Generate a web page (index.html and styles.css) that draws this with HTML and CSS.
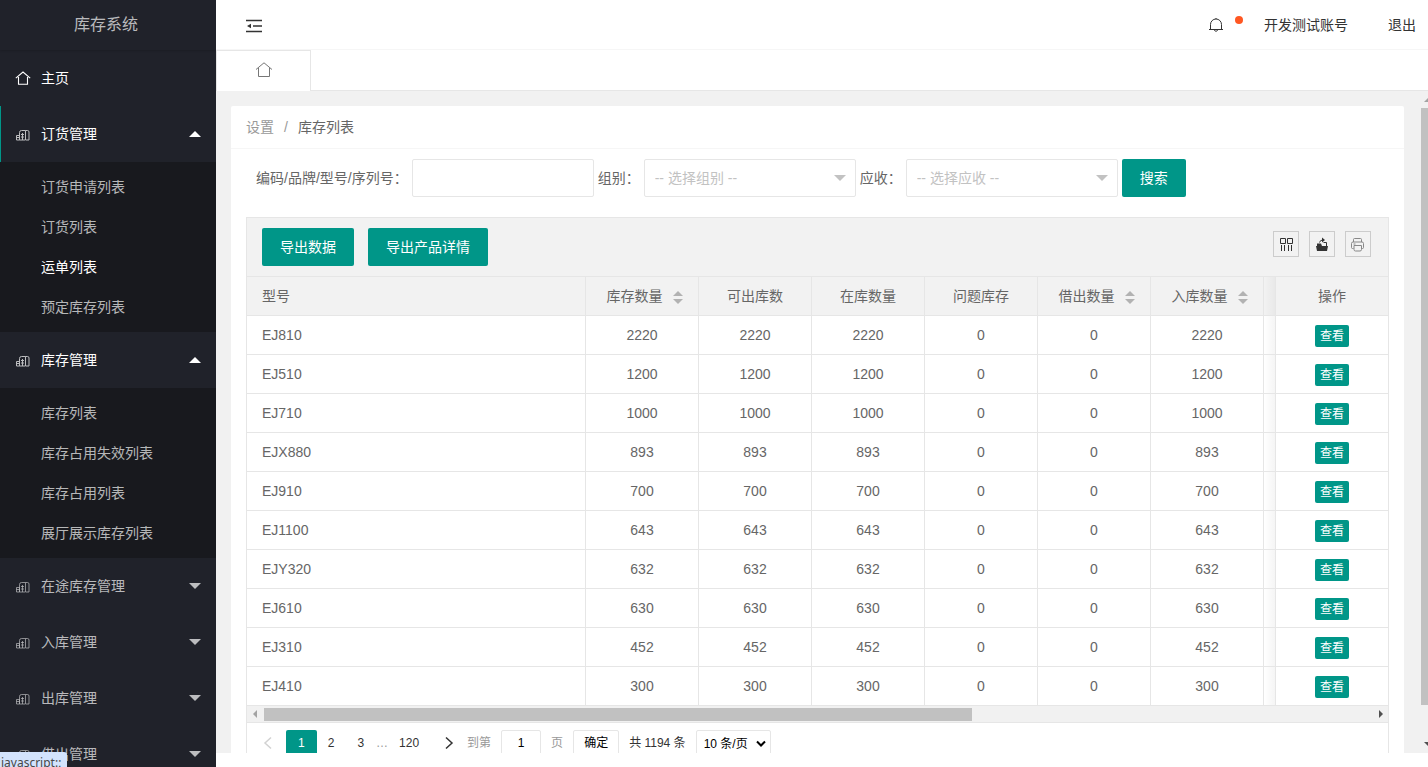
FILE: index.html
```html
<!DOCTYPE html>
<html lang="zh-CN">
<head>
<meta charset="utf-8">
<title>库存系统</title>
<link rel="stylesheet" href="styles.css">
</head>
<body>
<svg class="defs" width="0" height="0" aria-hidden="true">
  <symbol id="home" viewBox="0 0 16 16"><path d="M.8 8.200 8 2l7.200 6.200M3.500 7v7.300h9V7" fill="none" stroke="currentColor" stroke-width="1.100"/></symbol>
  <symbol id="chart" viewBox="0 0 14 12"><path d="M.5 6.500h3v4.500h-3zM.5 8.500h3M3.500 6V3.500q0-2 2-2h4V11H3.500zM6.500 4v7M9.500 1.500h2q1.500 0 1.500 1.500v8h-3M5 5.500h3M5 8h3" fill="none" stroke="currentColor"/></symbol>
</svg>
<div class="app">
  <aside class="side">
    <div class="logo">库存系统</div>
    <nav>
      <a class="item on" href="#"><svg class="ico"><use href="#home"/></svg>主页</a>
      <a class="item on current" href="#"><svg class="ico chart"><use href="#chart"/></svg>订货管理<i class="caret up"></i></a>
      <div class="sub"><a href="#">订货申请列表</a><a href="#">订货列表</a><a class="on" href="#">运单列表</a><a href="#">预定库存列表</a></div>
      <a class="item on" href="#"><svg class="ico chart"><use href="#chart"/></svg>库存管理<i class="caret up"></i></a>
      <div class="sub"><a href="#">库存列表</a><a href="#">库存占用失效列表</a><a href="#">库存占用列表</a><a href="#">展厅展示库存列表</a></div>
      <a class="item" href="#"><svg class="ico chart"><use href="#chart"/></svg>在途库存管理<i class="caret"></i></a>
      <a class="item" href="#"><svg class="ico chart"><use href="#chart"/></svg>入库管理<i class="caret"></i></a>
      <a class="item" href="#"><svg class="ico chart"><use href="#chart"/></svg>出库管理<i class="caret"></i></a>
      <a class="item" href="#"><svg class="ico chart"><use href="#chart"/></svg>借出管理<i class="caret"></i></a>
    </nav>
  </aside>
  <div class="main">
    <header class="top">
      <button class="plain" aria-label="收起菜单"><svg width="16" height="14" viewBox="0 0 16 14"><path d="M0 1.500h16M7 7h9M0 12.500h16" stroke="#333" stroke-width="1.400"/><path d="M1 7l4-2.200v4.400z" fill="#333"/></svg></button>
      <a class="bell" href="#" aria-label="消息"><svg width="16" height="16" viewBox="0 0 16 16" fill="none" stroke="#333"><path d="M1 12.500h14M2.500 12.500V7.500a5.500 5.500 0 0 1 11 0v5M6.200 13.200q1.800 2.400 3.600 0M8 1v1"/></svg><span class="dot"></span></a>
      <a class="account" href="#">开发测试账号</a>
      <a href="#">退出</a>
    </header>
    <div class="tabs"><a class="tab" href="#" aria-label="主页"><svg width="18" height="18" viewBox="0 0 18 18"><path d="M1 8.500 9 1.800l8 6.700M3.500 7v8.500h11V7" fill="none" stroke="#777"/></svg></a></div>
    <div class="stage">
      <div class="content">
        <section class="card">
          <div class="crumb"><a href="#">设置</a><span>/</span><b>库存列表</b></div>
          <div class="body">
            <form class="search">
              <label for="code">编码/品牌/型号/序列号：</label><input id="code" type="text">
              <label for="group">组别：</label><span class="pick"><select id="group"><option>-- 选择组别 --</option></select></span>
              <label for="due">应收：</label><span class="pick"><select id="due"><option>-- 选择应收 --</option></select></span>
              <button class="btn" type="button">搜索</button>
            </form>
            <div class="grid">
              <div class="tools">
                <button class="btn">导出数据</button><button class="btn">导出产品详情</button>
                <div class="toolset">
                  <button aria-label="筛选列"><svg width="16" height="16" viewBox="0 0 16 16" fill="none" stroke="#333"><path d="M3.500 2.500h5v5h-5zM10.500 2.500h5v5h-5zM4.500 9v6M7.500 9v6M11.500 9v6M14.500 9v6"/></svg></button>
                  <button aria-label="导出"><svg width="16" height="16" viewBox="0 0 16 16"><path d="M3 10h12l-1 5H4zM4 7.500h4l1 2.500H4z" fill="#333"/><path d="M10.500 6.500h3V10M6.500 6.500Q7 4 10 4" fill="none" stroke="#333"/><path d="M9 1.500 12 4 9 6.500z" fill="#333"/></svg></button>
                  <button aria-label="打印"><svg width="16" height="16" viewBox="0 0 16 16" fill="none" stroke="#888"><path d="M4.500 6V3.500q0-1 1-1h6q1 0 1 1V6M4.500 12.500h-1q-1 0-1-1v-4q0-1.500 1.500-1.500h9q1.500 0 1.500 1.500v4q0 1-1 1h-1M5 9.500h7.500v4q0 1.500-1.500 1.500H6.500Q5 15 5 13.500zM4.500 8h2"/></svg></button>
                </div>
              </div>
              <table>
                <colgroup><col><col class="num"><col class="num"><col class="num"><col class="num"><col class="num"><col class="num"><col class="edge"><col class="act"></colgroup>
                <thead><tr><th>型号</th><th class="sorted">库存数量<i class="sort"></i></th><th>可出库数</th><th>在库数量</th><th>问题库存</th><th class="sorted">借出数量<i class="sort"></i></th><th class="sorted">入库数量<i class="sort"></i></th><th class="shade"></th><th>操作</th></tr></thead>
                <tbody>
                  <tr><td>EJ810</td><td>2220</td><td>2220</td><td>2220</td><td>0</td><td>0</td><td>2220</td><td class="shade"></td><td><button class="view">查看</button></td></tr>
                  <tr><td>EJ510</td><td>1200</td><td>1200</td><td>1200</td><td>0</td><td>0</td><td>1200</td><td class="shade"></td><td><button class="view">查看</button></td></tr>
                  <tr><td>EJ710</td><td>1000</td><td>1000</td><td>1000</td><td>0</td><td>0</td><td>1000</td><td class="shade"></td><td><button class="view">查看</button></td></tr>
                  <tr><td>EJX880</td><td>893</td><td>893</td><td>893</td><td>0</td><td>0</td><td>893</td><td class="shade"></td><td><button class="view">查看</button></td></tr>
                  <tr><td>EJ910</td><td>700</td><td>700</td><td>700</td><td>0</td><td>0</td><td>700</td><td class="shade"></td><td><button class="view">查看</button></td></tr>
                  <tr><td>EJ1100</td><td>643</td><td>643</td><td>643</td><td>0</td><td>0</td><td>643</td><td class="shade"></td><td><button class="view">查看</button></td></tr>
                  <tr><td>EJY320</td><td>632</td><td>632</td><td>632</td><td>0</td><td>0</td><td>632</td><td class="shade"></td><td><button class="view">查看</button></td></tr>
                  <tr><td>EJ610</td><td>630</td><td>630</td><td>630</td><td>0</td><td>0</td><td>630</td><td class="shade"></td><td><button class="view">查看</button></td></tr>
                  <tr><td>EJ310</td><td>452</td><td>452</td><td>452</td><td>0</td><td>0</td><td>452</td><td class="shade"></td><td><button class="view">查看</button></td></tr>
                  <tr><td>EJ410</td><td>300</td><td>300</td><td>300</td><td>0</td><td>0</td><td>300</td><td class="shade"></td><td><button class="view">查看</button></td></tr>
                </tbody>
              </table>
              <div class="hbar"><svg width="17" height="16"><path d="M10 4v8L6 8z" fill="#a3a3a3"/></svg><div class="rail"><div class="thumb"></div></div><svg width="17" height="16"><path d="M8 4v8l4-4z" fill="#505050"/></svg></div>
              <div class="pager">
                <a class="arrow" href="#" aria-label="上一页"><svg width="10" height="14"><path d="M8 1.500 2 7l6 5.500" fill="none" stroke="#d2d2d2" stroke-width="1.500"/></svg></a>
                <a class="now" href="#">1</a><a href="#">2</a><a href="#">3</a><span class="dots">…</span><a href="#">120</a>
                <a class="arrow" href="#" aria-label="下一页"><svg width="10" height="14"><path d="M2 1.500 8 7l-6 5.500" fill="none" stroke="#333" stroke-width="1.500"/></svg></a>
                <div class="jump"><label for="page">到第</label><input id="page" type="text" value="1"><span>页</span><button>确定</button></div>
                <span class="count">共 1194 条</span>
                <span class="size"><select aria-label="每页条数"><option>10 条/页</option></select><svg width="10" height="8"><path d="M1 1.500 5 5.500l4-4" fill="none" stroke="#000" stroke-width="2"/></svg></span>
              </div>
            </div>
          </div>
        </section>
      </div>
      <div class="vbar"><svg width="7" height="17"><path d="M3 11h8L7 7z" fill="#a3a3a3"/></svg><div class="track"><div class="vthumb"></div></div><svg width="7" height="17"><path d="M3 6h8l-4 4z" fill="#505050"/></svg></div>
    </div>
  </div>
</div>
<div class="status">javascript:;</div>
</body>
</html>
```
FILE: styles.css
```css
* { box-sizing: border-box; }
body {
  margin: 0;
  background: #fff;
  color: #666;
  font: 14px/24px "Liberation Sans", "Noto Sans CJK SC", sans-serif;
}
a { color: inherit; text-decoration: none; }
button, input, select { font: inherit; color: inherit; margin: 0; }
button { cursor: pointer; }
svg { flex: none; display: block; }
.defs { position: absolute; }
.app { display: flex; height: 100vh; overflow: hidden; }

/* sidebar */
.side { flex: none; width: 216px; background: #20222a; color: rgba(255, 255, 255, .7); overflow: hidden; }
.logo {
  height: 50px;
  padding-right: 4px;
  line-height: 50px;
  font-size: 16px;
  text-align: center;
  box-shadow: 0 1px 2px rgba(0, 0, 0, .15);
}
.item { display: flex; align-items: center; height: 56px; padding: 0 15px; }
.item.current { padding-left: 14px; border-left: 1px solid #009688; }
.ico { width: 16px; height: 16px; margin-right: 10px; }
.ico.chart { width: 14px; height: 12px; margin: 2px 11px 0 1px; opacity: .7; }
.caret { margin-left: auto; border: 6px solid transparent; border-top-color: currentColor; border-bottom: 0; }
.caret.up { border-top: 0; border-bottom: 6px solid currentColor; }
.sub { padding: 5px 0; background: #18191e; }
.sub a { display: block; padding-left: 41px; line-height: 40px; }
.side .on { color: #fff; }

/* top bar */
.main { flex: 1; min-width: 0; height: calc(100vh - 14px); display: flex; flex-direction: column; overflow: hidden; }
.top {
  flex: none;
  display: flex;
  align-items: center;
  height: 50px;
  padding: 0 12px 0 30px;
  border-bottom: 1px solid #f6f6f6;
  color: #333;
}
.plain { padding: 0; border: 0; background: none; }
.top .plain { margin-top: 2px; }
.bell { display: flex; margin-left: auto; gap: 11px; }
.bell svg { margin-top: 1px; }
.dot { width: 8px; height: 8px; border-radius: 50%; background: #ff5722; }
.account { margin: 0 40px 0 21px; }
.tabs { flex: none; height: 41px; border-bottom: 1px solid #e6e6e6; }
.tab {
  display: flex;
  justify-content: center;
  width: 95px;
  height: 41px;
  padding-top: 10px;
  border: 1px solid #e6e6e6;
  border-bottom: 0;
  background: #fff;
}

/* content */
.stage { flex: 1; min-height: 0; display: flex; background: #f1f1f1; }
.content { flex: 1; min-width: 0; padding: 15px 17px 0 15px; overflow: hidden; }
.card { background: #fff; border-radius: 2px; }
.crumb { display: flex; height: 43px; padding: 0 15px; line-height: 42px; border-bottom: 1px solid #f6f6f6; }
.crumb a, .crumb span { color: #999; }
.crumb span { margin: 0 10px; }
.crumb b { font-weight: 400; }
.body { padding: 10px 15px; }
.search { display: flex; align-items: center; gap: 4px; padding-left: 10px; margin-bottom: 20px; }
.search label { white-space: nowrap; }
.search input { width: 182px; height: 38px; padding: 0 10px; border: 1px solid #e6e6e6; border-radius: 2px; }
.pick { position: relative; width: 212px; }
.pick select {
  appearance: none;
  display: block;
  width: 100%;
  height: 38px;
  padding: 0 10px;
  border: 1px solid #e6e6e6;
  border-radius: 2px;
  background: #fff;
  color: #c2c2c2;
}
.pick::after {
  content: "";
  position: absolute;
  right: 10px;
  top: 16px;
  border: 6px solid transparent;
  border-top-color: #c2c2c2;
  border-bottom: 0;
  pointer-events: none;
}
.btn { height: 38px; padding: 0 18px; border: 0; border-radius: 2px; background: #009688; color: #fff; white-space: nowrap; }

/* table */
.grid { border: 1px solid #e6e6e6; }
.tools { display: flex; gap: 14px; padding: 10px 17px 10px 15px; background: #f2f2f2; border-bottom: 1px solid #e6e6e6; }
.toolset { display: flex; gap: 10px; margin: 3px 0 0 auto; }
.toolset button { display: grid; place-items: center; width: 26px; height: 26px; padding: 0; border: 1px solid #ccc; background: none; }
.toolset svg { margin-right: 2px; }
table { width: 100%; table-layout: fixed; border-collapse: separate; border-spacing: 0; }
.num { width: 113px; }
.edge { width: 12px; }
.act { width: 112px; }
th, td {
  height: 39px;
  padding: 0;
  font-weight: 400;
  line-height: 24px;
  text-align: center;
  border-right: 1px solid #e6e6e6;
  border-bottom: 1px solid #e6e6e6;
}
th { background: #f2f2f2; }
th:first-child, td:first-child { padding-left: 15px; text-align: left; }
th:last-child, td:last-child { border-right: 0; }
th.sorted { padding-left: 5px; }
.shade { background-image: linear-gradient(to right, rgba(0, 0, 0, 0), rgba(0, 0, 0, .04)); }
.sort { display: inline-grid; gap: 3px; margin-left: 10px; vertical-align: middle; }
.sort::before, .sort::after { content: ""; border: 5px solid transparent; }
.sort::before { border-top: 0; border-bottom-color: #b2b2b2; }
.sort::after { border-bottom: 0; border-top-color: #b2b2b2; }
.view {
  display: block;
  height: 22px;
  margin: 2px auto 0;
  padding: 0 5px;
  border: 0;
  border-radius: 2px;
  background: #009688;
  color: #fff;
  font-size: 12px;
  line-height: 22px;
}

/* scrollbars */
.hbar { display: flex; height: 17px; background: #f1f1f1; border-bottom: 1px solid #e6e6e6; }
.rail { flex: 1; padding: 2px 0 1px; }
.thumb { width: 64%; height: 13px; background: #c1c1c1; }
.vbar { flex: none; width: 7px; display: flex; flex-direction: column; }
.track { flex: 1; }
.vthumb { height: 95%; background: #c1c1c1; }

/* pager */
.pager { display: flex; align-items: center; padding: 7px 3px; font-size: 12px; line-height: 26px; color: #333; white-space: nowrap; }
.pager > a { padding: 0 12px 0 11px; }
.pager > .arrow { padding: 0 13px; }
.pager > .now { padding: 0 12px; background: #009688; color: #fff; border-radius: 2px; }
.dots { color: #999; }
.jump { display: flex; gap: 10px; color: #999; }
.jump input, .jump button { height: 26px; padding: 0 10px; border: 1px solid #e6e6e6; border-radius: 2px; background: #fff; color: #000; line-height: 24px; }
.jump input { width: 40px; text-align: center; }
.count { margin: 0 10px; }
.size { position: relative; }
.size select { appearance: none; display: block; width: 75px; height: 26px; padding: 0 7px; border: 1px solid #e6e6e6; border-radius: 2px; background: #fff; color: #000; }
.size svg { position: absolute; right: 5px; top: 10px; pointer-events: none; }

/* link preview bubble */
.status {
  position: absolute;
  left: 0;
  bottom: 0;
  width: 67px;
  height: 15px;
  padding-left: 1px;
  overflow: hidden;
  background: #d3e3fd;
  border-top-right-radius: 3px;
  color: #474747;
  font: 12px/21px "Noto Sans", sans-serif;
}
```
